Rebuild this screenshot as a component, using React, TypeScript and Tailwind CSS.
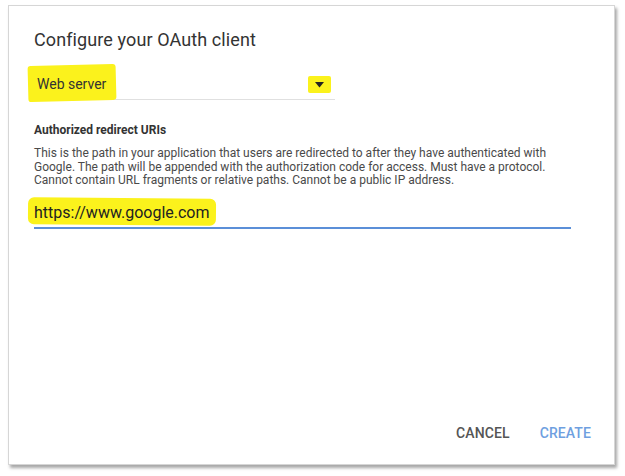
import React from 'react';

const App: React.FC = () => {
  return (
    <div className="w-[625px] h-[476px] bg-white pt-[5px] pl-[8px]" style={{ fontFamily: 'Roboto, "Liberation Sans", sans-serif' }}>
      <div className="w-[607px] h-[460px] bg-white border border-[#d6d6d6] shadow-[2px_3px_3px_rgba(0,0,0,0.35)] flex flex-col pl-[25px] pr-[44px]">
        <h2 className="mt-[22px] text-[18px] leading-[24px] text-[#333] tracking-[0.1px]">Configure your OAuth client</h2>

        {/* select */}
        <div className="mt-[18px] w-[301px] border-b border-[#e0e0e0] h-[30px] flex items-center justify-between relative">
          <span className="relative text-[14px] text-[#333] ml-[3px]">
            <span className="absolute -left-[9px] -right-[10px] -top-[9px] -bottom-[6px] bg-[#fbf21c] rounded-[3px] -rotate-[1.5deg]" />
            <span className="relative">Web server</span>
          </span>
          <span className="relative w-[23px] h-[17px] bg-[#fbf21c] rounded-[2px] flex items-center justify-center mr-[4px]">
            <svg width="9" height="6" viewBox="0 0 9 6"><path d="M0 0 H9 L4.5 5.5 Z" fill="#222" /></svg>
          </span>
        </div>

        <div className="mt-[22px] text-[12px] leading-[16px] font-bold text-[#333]">Authorized redirect URIs</div>
        <p className="mt-[9px] text-[12px] leading-[13.5px] text-[#4a4a4a] w-[545px]">
          This is the path in your application that users are redirected to after they have authenticated with Google. The path will be appended with the authorization code for access. Must have a protocol. Cannot contain URL fragments or relative paths. Cannot be a public IP address.
        </p>

        {/* url input */}
        <div className="mt-[15px] w-[537px] border-b-2 border-[#5b8fd8] pb-[4px] leading-[20px]">
          <span className="relative text-[16px] leading-[20px] text-[#222]">
            <span className="absolute -left-[6px] -right-[6px] -top-[5px] -bottom-[3px] bg-[#fbf21c] rounded-[6px] rotate-[0.5deg]" />
            <span className="relative">https://www.google.com</span>
          </span>
        </div>

        <div className="mt-auto mb-[20px] flex justify-end gap-[30px] text-[14px] font-medium tracking-[0.1px] -mr-[21px]">
          <button className="text-[#555]">CANCEL</button>
          <button className="text-[#6f9fe0]">CREATE</button>
        </div>
      </div>
    </div>
  );
};

export default App;
